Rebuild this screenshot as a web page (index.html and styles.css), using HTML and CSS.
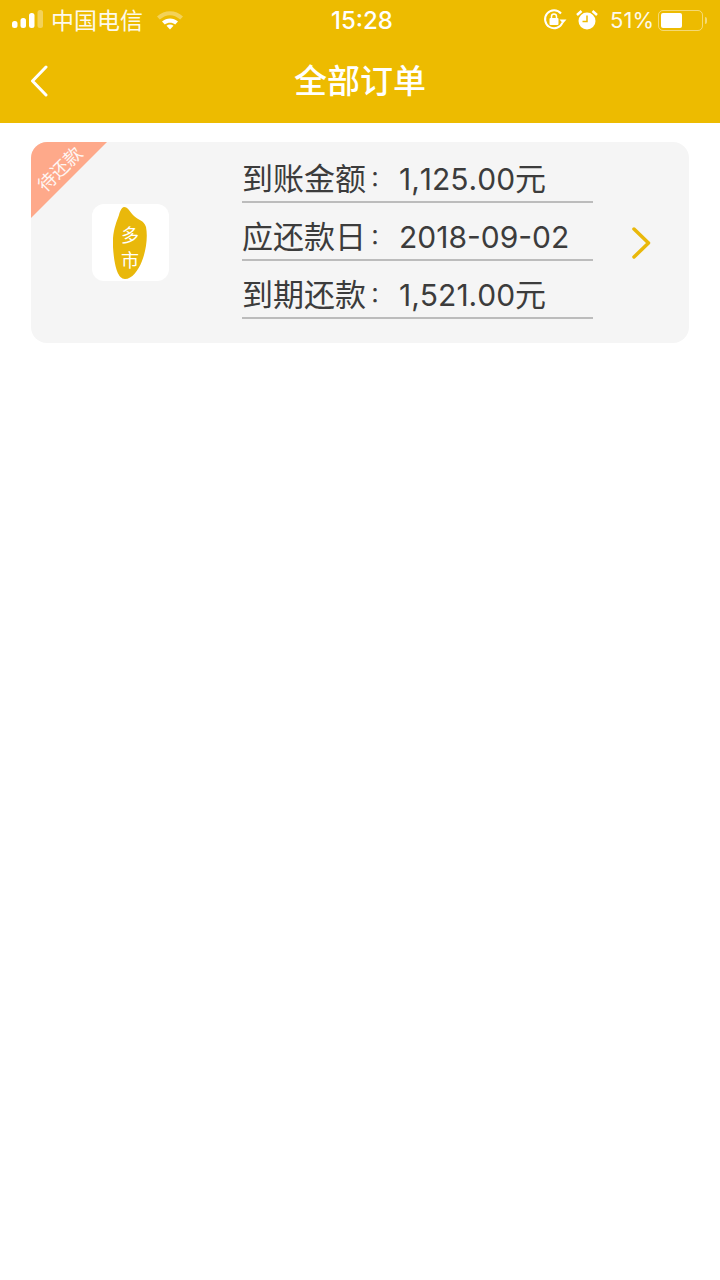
FILE: index.html
```html
<!DOCTYPE html>
<html>
  <head>
    <meta charset="utf-8">
    <title>全部订单</title>
    <link rel="stylesheet" href="styles.css">
  </head>
  <body>
    <!-- Cabecera amarilla -->
    <div class="top">
      <div class="status">
        <div class="statusLeft">
          <svg class="signal" width="32" height="20" viewBox="0 0 32 20">
            <rect x="0" y="11" width="5.500" height="7" rx="2.500" fill="#fff"/>
            <rect x="8.500" y="8" width="5.500" height="10" rx="2.500" fill="#fff"/>
            <rect x="17" y="3" width="5.500" height="15" rx="2.500" fill="#fff"/>
            <rect x="25.500" y="0" width="5.500" height="18" rx="2.500" fill="#fff" opacity="0.35"/>
          </svg>
          <span class="carrier">中国电信</span>
          <svg class="wifi" width="26" height="20" viewBox="0 0 26 20">
            <path d="M0 6.500C7.500 -.5 18.500 -.5 26 6.500l-2.800 3C16.500 3.800 9.500 3.800 2.800 9.500z" fill="#fff" opacity="0.35"/>
            <path d="M5 11.500c4.700-4 11.300-4 16 0l-2.800 3c-3-2.500-7.400-2.500-10.400 0z" fill="#fff"/>
            <path d="M9.500 15.700c2.100-1.600 4.900-1.600 7 0L13 19.500z" fill="#fff"/>
          </svg>
        </div>
        <span class="clock">15:28</span>
        <div class="statusRight">
          <svg class="lock" width="24" height="24" viewBox="0 0 24 24">
            <path d="M19.500 14.500A9 9 0 1 1 18 5.500" fill="none" stroke="#fff" stroke-width="2"/>
            <path d="M23.500 11.500h-7l3.500 4z" fill="#fff"/>
            <rect x="6.500" y="10" width="9" height="7" rx="1" fill="#fff"/>
            <path d="M8.500 10V8.500a2.500 2.500 0 0 1 5 0V10" fill="none" stroke="#fff" stroke-width="1.500"/>
          </svg>
          <svg class="alarm" width="22" height="22" viewBox="0 0 22 22">
            <circle cx="11" cy="12" r="8.500" fill="#fff"/>
            <path d="M11 6.500V12.500H6.500" fill="none" stroke="#edbb00" stroke-width="1.500"/>
            <path d="M1 6l4.500-4M21 6l-4.500-4" stroke="#fff" stroke-width="2.500" fill="none"/>
          </svg>
          <span class="percent">51%</span>
          <div class="battery"><div class="batteryFill" style="width: 53%"></div></div>
          <div class="batteryTip"></div>
        </div>
      </div>
      <div class="nav">
        <svg class="back" width="18" height="32" viewBox="0 0 18 32">
          <path d="M16 2L2.500 16 16 30" fill="none" stroke="#fff" stroke-width="3" stroke-linecap="round" stroke-linejoin="round"/>
        </svg>
        <h1>全部订单</h1>
      </div>
    </div>

    <!-- Tarjeta del pedido -->
    <div class="card">
      <div class="ribbon"></div>
      <span class="ribbonText">待还款</span>
      <div class="logo">
        <svg class="grain" width="34" height="72" viewBox="0 0 34 72">
          <path d="M11 0C15 0 17 5 21 9 25 13 31 13 33 20 35 30 33 44 29 54 25 64 19 72 12 72 4 72 1 56 0 40-1 26 3 16 6 8 7 4 9 0 11 0z" fill="#e9b80b"/>
          <text x="17" y="35" class="grainText">多</text>
          <text x="17" y="60" class="grainText">市</text>
        </svg>
      </div>
      <div class="rows">
        <div class="row"><span class="label">到账金额<span class="colon">：</span></span><span class="num">1,125.00</span><span>元</span></div>
        <div class="row"><span class="label">应还款日<span class="colon">：</span></span><span class="num">2018-09-02</span></div>
        <div class="row"><span class="label">到期还款<span class="colon">：</span></span><span class="num">1,521.00</span><span>元</span></div>
      </div>
      <svg class="arrow" width="20" height="32" viewBox="0 0 20 32">
        <path d="M3 2L17.500 16 3 30" fill="none" stroke="#e9b80b" stroke-width="3.500" stroke-linecap="round" stroke-linejoin="round"/>
      </svg>
    </div>
  </body>
</html>
```

FILE: styles.css
```css
body {
  margin: 0;
  background: #fff;
  color: #3c3c3c;
  font-family: "Noto Sans CJK SC", "Liberation Sans", sans-serif;
}

.top {
  height: 123px;
  background: #edbb00;
  color: #fff;
}

.status {
  height: 40px;
  display: flex;
  align-items: center;
  justify-content: space-between;
  padding: 0 13px 0 12px;
  font-size: 23px;
  position: relative;
}

.statusLeft,
.statusRight {
  display: flex;
  align-items: center;
}

.carrier {
  margin-left: 7px;
  margin-top: -2px;
  opacity: 0.92;
}

.wifi {
  margin-left: 14px;
}

.clock {
  position: absolute;
  left: 331px;
  font-family: Inter, "Liberation Sans", sans-serif;
  font-weight: 500;
  font-size: 24px;
}

.lock {
  margin-right: 9px;
}

.alarm {
  margin-right: 12px;
}

.percent {
  font-family: Inter, "Liberation Sans", sans-serif;
  font-size: 22px;
  margin-right: 4px;
  opacity: 0.92;
}

.battery {
  width: 45px;
  height: 21px;
  box-sizing: border-box;
  padding: 2px;
  border: 1.500px solid rgba(255, 255, 255, 0.45);
  border-radius: 5px;
}

.batteryFill {
  height: 100%;
  background: #fff;
  border-radius: 2px;
}

.batteryTip {
  width: 2px;
  height: 7px;
  margin-left: 2px;
  background: rgba(255, 255, 255, 0.45);
  border-radius: 0 2px 2px 0;
}

.nav {
  height: 83px;
  box-sizing: border-box;
  padding-bottom: 6px;
  display: flex;
  align-items: center;
  justify-content: center;
  position: relative;
}

.nav h1 {
  margin: 0;
  font-size: 33px;
  font-weight: 500;
}

.back {
  position: absolute;
  left: 30px;
  top: 25px;
}

.card {
  margin: 19px 31px 0;
  height: 201px;
  display: flex;
  align-items: center;
  background: #f5f5f5;
  border-radius: 16px;
  position: relative;
}

.ribbon {
  position: absolute;
  left: 0;
  top: 0;
  width: 76px;
  height: 76px;
  background: #fea98a;
  border-top-left-radius: 16px;
  clip-path: polygon(0 0, 100% 0, 0 100%);
}

.ribbonText {
  position: absolute;
  left: 0;
  top: 15px;
  width: 56px;
  text-align: center;
  font-size: 18px;
  line-height: 22px;
  color: #fff;
  opacity: 0.9;
  transform: rotate(-45deg);
  white-space: nowrap;
}

.logo {
  width: 77px;
  height: 77px;
  margin-left: 61px;
  display: flex;
  align-items: center;
  justify-content: center;
  background: #fff;
  border-radius: 12px;
}

.grain {
  margin-right: 2px;
}

.grainText {
  font-size: 18px;
  fill: #fff;
  text-anchor: middle;
}

.rows {
  width: 351px;
  margin-left: 73px;
  align-self: flex-start;
  padding-top: 3px;
}

.row {
  height: 58px;
  box-sizing: border-box;
  padding-top: 8px;
  border-bottom: 2px solid #bcbcbc;
  display: flex;
  align-items: baseline;
  font-size: 31px;
  line-height: 48px;
  white-space: nowrap;
}

.label {
  width: 157px;
}

.colon {
  font-family: "Noto Sans CJK TC", sans-serif;
  font-size: 22px;
  margin-left: -2px;
  vertical-align: 3px;
}

.num {
  font-family: Inter, "Liberation Sans", sans-serif;
  font-size: 30px;
  font-kerning: none;
}

.arrow {
  margin-left: 38px;
}
```
